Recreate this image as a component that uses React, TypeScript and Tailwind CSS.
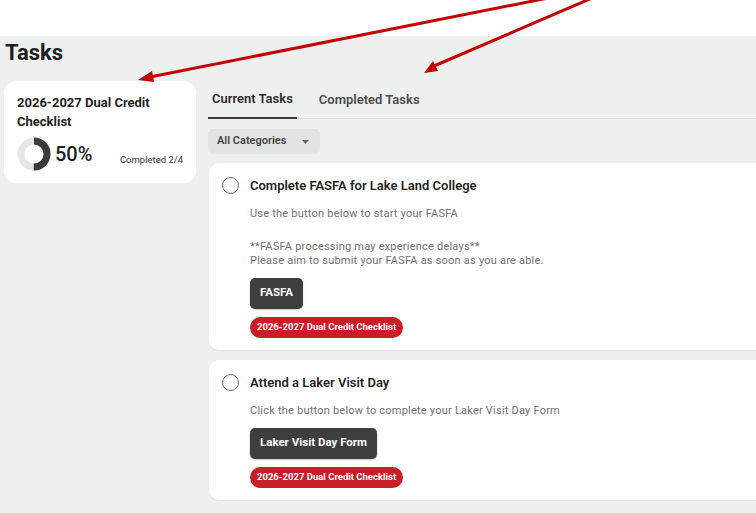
import React from "react";

type Task = {
  title: string;
  paragraphs: string[][];
  button: string;
  category: string;
};

const tasks: Task[] = [
  {
    title: "Complete FASFA for Lake Land College",
    paragraphs: [
      ["Use the button below to start your FASFA"],
      ["**FASFA processing may experience delays**", "Please aim to submit your FASFA as soon as you are able."],
    ],
    button: "FASFA",
    category: "2026-2027 Dual Credit Checklist",
  },
  {
    title: "Attend a Laker Visit Day",
    paragraphs: [["Click the button below to complete your Laker Visit Day Form"]],
    button: "Laker Visit Day Form",
    category: "2026-2027 Dual Credit Checklist",
  },
];

function Donut({ pct }: { pct: number }) {
  const r = 13;
  const c = 2 * Math.PI * r;
  return (
    <svg width="34" height="34" viewBox="0 0 34 34">
      <circle cx="17" cy="17" r={r} fill="none" stroke="#e6e7e7" strokeWidth="7" />
      <circle
        cx="17"
        cy="17"
        r={r}
        fill="none"
        stroke="#3b3b3b"
        strokeWidth="7"
        strokeDasharray={`${(c * pct) / 100} ${c}`}
        transform="rotate(-90 17 17)"
      />
    </svg>
  );
}

function TaskCard({ task }: { task: Task }) {
  return (
    <div className="ml-px rounded-[10px] bg-white pl-[13px] pr-4 pt-[12px] pb-[12.5px] shadow-[0_1px_2px_rgba(0,0,0,0.06)]">
      <div className="flex items-center">
        <span className="h-[17px] w-[17px] rounded-full border-[1.5px] border-[#6e6e6e]" />
        <h3 className="ml-[11px] text-[13px] font-semibold leading-[21px] text-[#1f1f1f]">{task.title}</h3>
      </div>
      <div className="ml-[28px] mt-[10.5px] text-[11px] leading-[13.5px] tracking-[0.22px] text-[#6f6f6f]">
        {task.paragraphs.map((p, i) => (
          <p key={i} className={i > 0 ? "mt-[20px]" : ""}>
            {p.map((line, j) => (
              <span key={j} className="block">
                {line}
              </span>
            ))}
          </p>
        ))}
        <button className="mt-[10.5px] h-[31px] rounded-[5px] bg-[#3e3e3e] px-[10px] text-[11.5px] font-bold tracking-normal text-white shadow-[0_1px_2px_rgba(0,0,0,0.25)]">
          {task.button}
        </button>
        <div>
          <span className="mt-[8px] inline-flex h-[21px] items-center rounded-full bg-[#c61f28] px-[7px] text-[9.5px] font-bold tracking-normal text-white">
            {task.category}
          </span>
        </div>
      </div>
    </div>
  );
}

export default function App() {
  return (
    <div className="relative h-[513px] w-[756px] overflow-hidden bg-white font-['Roboto',sans-serif]">
      <div className="h-[36px] bg-white" />
      <div className="h-[477px] bg-[#eef0f0]">
        <h1 className="px-[5px] pt-[2px] text-[22px] font-bold leading-[30px] text-[#1e1e1e]">Tasks</h1>

        <div className="mt-[13px] flex">
          {/* ---------- CHECKLIST ---------- */}
          <div className="ml-[4px] w-[192px] shrink-0">
            <div className="rounded-[12px] bg-white px-[13px] pt-[12px] pb-[12px]">
              <h2 className="text-[13px] font-bold leading-[19px] text-[#1e1e1e]">
                2026-2027 Dual Credit Checklist
              </h2>
              <div className="mt-[6px] flex items-center">
                <Donut pct={50} />
                <span className="ml-[4px] text-[20px] font-medium leading-[24px] text-[#1e1e1e]">50%</span>
                <span className="ml-auto mt-[13px] text-[9.5px] text-[#333]">Completed 2/4</span>
              </div>
            </div>
          </div>

          {/* ---------- TASKS ---------- */}
          <div className="ml-[12px] w-[560px] shrink-0">
            <div className="flex items-end gap-[22px] border-b border-[#dcdede]">
              <button className="-mb-px border-b-2 border-[#3a3a3a] px-[4px] pb-[8px] pt-[8px] text-[13px] font-semibold leading-[20px] text-[#2a2a2a]">
                Current Tasks
              </button>
              <button className="pb-[8px] pt-[8px] text-[13px] font-semibold leading-[20px] text-[#4a4a4a]">
                Completed Tasks
              </button>
            </div>

            <div className="mt-[10px] inline-flex h-[25px] items-center gap-[16px] rounded-[5px] bg-[#e2e4e4] pl-[9px] pr-[11px] text-[11px] font-semibold text-[#444]">
              All Categories
              <svg width="7" height="4" viewBox="0 0 7 4">
                <path d="M0 0h7L3.5 4z" fill="#666" />
              </svg>
            </div>

            <div className="mt-[9px] flex flex-col gap-[10px]">
              {tasks.map((t) => (
                <TaskCard key={t.title} task={t} />
              ))}
            </div>
          </div>
        </div>
      </div>

      {/* annotation arrows */}
      <svg className="pointer-events-none absolute inset-0" width="756" height="513" viewBox="0 0 756 513">
        <g stroke="#c40000" strokeWidth="3" strokeLinecap="round" fill="none">
          <line x1="548" y1="-2" x2="150" y2="77" />
          <line x1="592" y1="-2" x2="434" y2="66" />
        </g>
        <g fill="#c40000">
          <polygon points="138,80 152,71 154,82" />
          <polygon points="424,73 433,61 438,71" />
        </g>
      </svg>
    </div>
  );
}
